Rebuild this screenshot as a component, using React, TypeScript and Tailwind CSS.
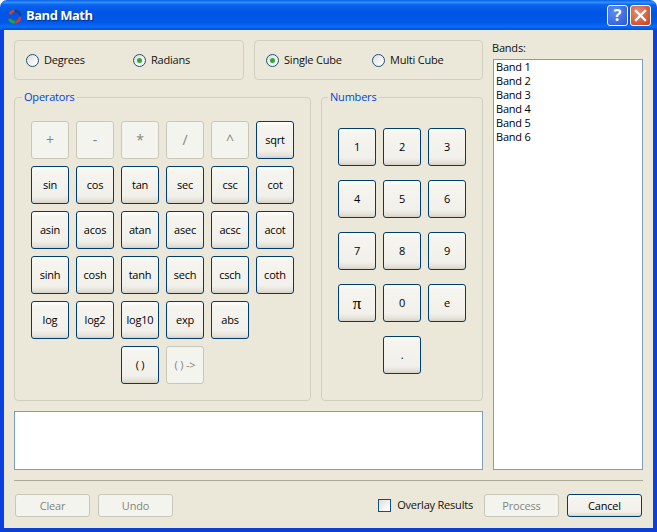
const font = "font-['Open_Sans','DejaVu_Sans',sans-serif]";

const operators: [string, boolean][] = [
  ["+", false], ["-", false], ["*", false], ["/", false], ["^", false], ["sqrt", true],
  ["sin", true], ["cos", true], ["tan", true], ["sec", true], ["csc", true], ["cot", true],
  ["asin", true], ["acos", true], ["atan", true], ["asec", true], ["acsc", true], ["acot", true],
  ["sinh", true], ["cosh", true], ["tanh", true], ["sech", true], ["csch", true], ["coth", true],
  ["log", true], ["log2", true], ["log10", true], ["exp", true], ["abs", true],
];

const numbers = ["1", "2", "3", "4", "5", "6", "7", "8", "9"];
const bands = ["Band 1", "Band 2", "Band 3", "Band 4", "Band 5", "Band 6"];

function XpButton({ label, enabled = true, size = "text-[11px]", className = "" }: { label: string; enabled?: boolean; size?: string; className?: string }) {
  const look = enabled
    ? "border-[#003c74] text-black bg-[linear-gradient(180deg,#ffffff_0%,#f5f4ee_12%,#f1f0ea_80%,#e3e0d6_94%,#d6d0c5_100%)]"
    : "border-[#c9c7ba] text-[#85857b] bg-[#f4f4ef]";
  return (
    <button className={`flex items-center justify-center rounded-[3px] border leading-none ${size} ${look} ${className}`}>
      {label}
    </button>
  );
}

function Radio({ label, checked = false, className = "" }: { label: string; checked?: boolean; className?: string }) {
  return (
    <div className={`flex items-center gap-[5px] ${className}`}>
      <span className="flex h-[13px] w-[13px] items-center justify-center rounded-full border border-[#1c5180] bg-[linear-gradient(135deg,#dcdcd7_0%,#ffffff_85%)]">
        {checked && <span className="h-[5px] w-[5px] rounded-full bg-[#2fa83a]" />}
      </span>
      <span className="pb-px text-[11px] leading-none text-[#111]">{label}</span>
    </div>
  );
}

function Group({ title, titleClass = "left-[7px]", className = "", children }: { title?: string; titleClass?: string; className?: string; children: React.ReactNode }) {
  return (
    <div className={`relative rounded-[4px] border border-[#d0d0bf] ${className}`}>
      {title && (
        <span className={`absolute top-[-8px] bg-[#ebe8d9] px-[2px] text-[11px] leading-[14px] text-[#0046d5] ${titleClass}`}>
          {title}
        </span>
      )}
      {children}
    </div>
  );
}

function AppIcon() {
  return (
    <svg width="15" height="15" viewBox="0 0 16 16" fill="none" strokeWidth="3" className="mt-[2px]">
      <path d="M3 5.5 A6 6 0 0 1 8 2" stroke="#c8452e" />
      <path d="M8 2 A6 6 0 0 1 14 7" stroke="#1c3f86" />
      <path d="M14 8.5 A6 6 0 0 1 9 14" stroke="#d23a2a" />
      <path d="M8.5 14 A6 6 0 0 1 2.5 10.5" stroke="#2f9e3c" />
      <path d="M2.4 10.5 A6 6 0 0 1 2.6 6" stroke="#2a49c8" />
    </svg>
  );
}

export default function App() {
  return (
    <div className={`flex h-[532px] w-[657px] flex-col overflow-hidden bg-white tracking-[-0.2px] ${font}`}>
      {/* Title bar */}
      <div className="flex h-[30px] shrink-0 items-center rounded-t-[7px] bg-[linear-gradient(180deg,#0a5fe6_0%,#2f8ffb_8%,#0a63ee_16%,#0055e5_40%,#0058ea_75%,#0a6bf5_88%,#0050d8_100%)] pl-[7px] pr-[6px]">
        <AppIcon />
        <span className="ml-[4px] text-[13px] font-bold leading-none tracking-[-0.5px] text-white [text-shadow:1px_1px_1px_#0a2a80]">
          Band Math
        </span>
        <div className="ml-auto flex gap-[2px]">
          <div className="flex h-[21px] w-[21px] items-center justify-center rounded-[3px] border border-white bg-[radial-gradient(circle_at_35%_30%,#5c8cf0,#2c58d8)] text-[16px] font-bold leading-none text-white">
            ?
          </div>
          <div className="flex h-[21px] w-[21px] items-center justify-center rounded-[3px] border border-white bg-[radial-gradient(circle_at_35%_30%,#ec8a6a,#c8401c)]">
            <svg width="13" height="13" viewBox="0 0 13 13">
              <path d="M2 2 L11 11 M11 2 L2 11" stroke="#fff" strokeWidth="2.4" strokeLinecap="square" />
            </svg>
          </div>
        </div>
      </div>

      {/* Dialog body */}
      <div className="flex flex-1 flex-col border-x-4 border-b-4 border-x-[#0a3fe0] border-b-[#0a3fd8] bg-[#ebe8d9] px-[10px] pt-[10px]">
        <div className="flex gap-[10px]">
          <div className="flex w-[469px] flex-col">
            <div className="flex gap-[10px]">
              <Group className="flex h-[40px] w-[230px] items-center pl-[11px]">
                <Radio label="Degrees" className="w-[107px]" />
                <Radio label="Radians" checked />
              </Group>
              <Group className="flex h-[40px] w-[229px] items-center pl-[11px]">
                <Radio label="Single Cube" checked className="w-[106px]" />
                <Radio label="Multi Cube" />
              </Group>
            </div>

            <div className="mt-[17px] flex gap-[10px]">
              <Group title="Operators" className="h-[304px] w-[297px] pl-[16px] pt-[23px]">
                <div className="grid grid-cols-[repeat(6,38px)] auto-rows-[38px] gap-[7px]">
                  {operators.map(([label, enabled]) => (
                    <XpButton key={label} label={label} enabled={enabled} size={enabled ? "text-[11px]" : "text-[14px]"} className="pb-px" />
                  ))}
                  <div className="col-span-1" />
                  <XpButton label="( )" className="col-start-3 pb-px" />
                  <XpButton label="( ) ->" enabled={false} className="pb-px" />
                </div>
              </Group>
              <Group title="Numbers" titleClass="left-[6px]" className="h-[304px] w-[162px] pl-[16px] pt-[30px]">
                <div className="grid grid-cols-[repeat(3,38px)] auto-rows-[38px] gap-x-[7px] gap-y-[14px]">
                  {numbers.map((n) => (
                    <XpButton key={n} label={n} className="pb-px" />
                  ))}
                  <button className="flex items-center justify-center rounded-[3px] border border-[#003c74] bg-[linear-gradient(180deg,#ffffff_0%,#f5f4ee_12%,#f1f0ea_80%,#e3e0d6_94%,#d6d0c5_100%)] font-['Liberation_Serif',serif] text-[17px] leading-none text-black">
                    π
                  </button>
                  <XpButton label="0" className="pb-px" />
                  <XpButton label="e" className="pb-px" />
                  <XpButton label="." className="col-start-2 pb-px" />
                </div>
              </Group>
            </div>

            <div className="mt-[10px] h-[59px] border border-[#7f9db9] bg-white" />
          </div>

          <div className="flex w-[150px] flex-col">
            <span className="-ml-px h-[19px] pt-px text-[11px] leading-[14px] text-[#111]">Bands:</span>
            <div className="flex-1 border border-[#7f9db9] bg-white pl-[2px]">
              {bands.map((b) => (
                <div key={b} className="h-[14px] text-[11px] leading-[14px] text-black">
                  {b}
                </div>
              ))}
            </div>
          </div>
        </div>

        <div className="mt-[10px] h-[2px] border-t border-[#aca899] border-b-white" />

        <div className="mt-[12px] flex h-[23px] items-center px-px">
          <XpButton label="Clear" enabled={false} className="h-[23px] w-[75px]" />
          <XpButton label="Undo" enabled={false} className="ml-[8px] h-[23px] w-[75px]" />
          <span className="ml-auto h-[13px] w-[13px] border border-[#0f4f8a] bg-[linear-gradient(135deg,#dcdcd7_0%,#ffffff_85%)]" />
          <span className="ml-[6px] mr-[11px] pb-[2px] text-[11px] leading-none text-[#111]">Overlay Results</span>
          <XpButton label="Process" enabled={false} className="h-[23px] w-[75px]" />
          <XpButton label="Cancel" className="ml-[8px] h-[23px] w-[75px]" />
        </div>
      </div>
    </div>
  );
}
